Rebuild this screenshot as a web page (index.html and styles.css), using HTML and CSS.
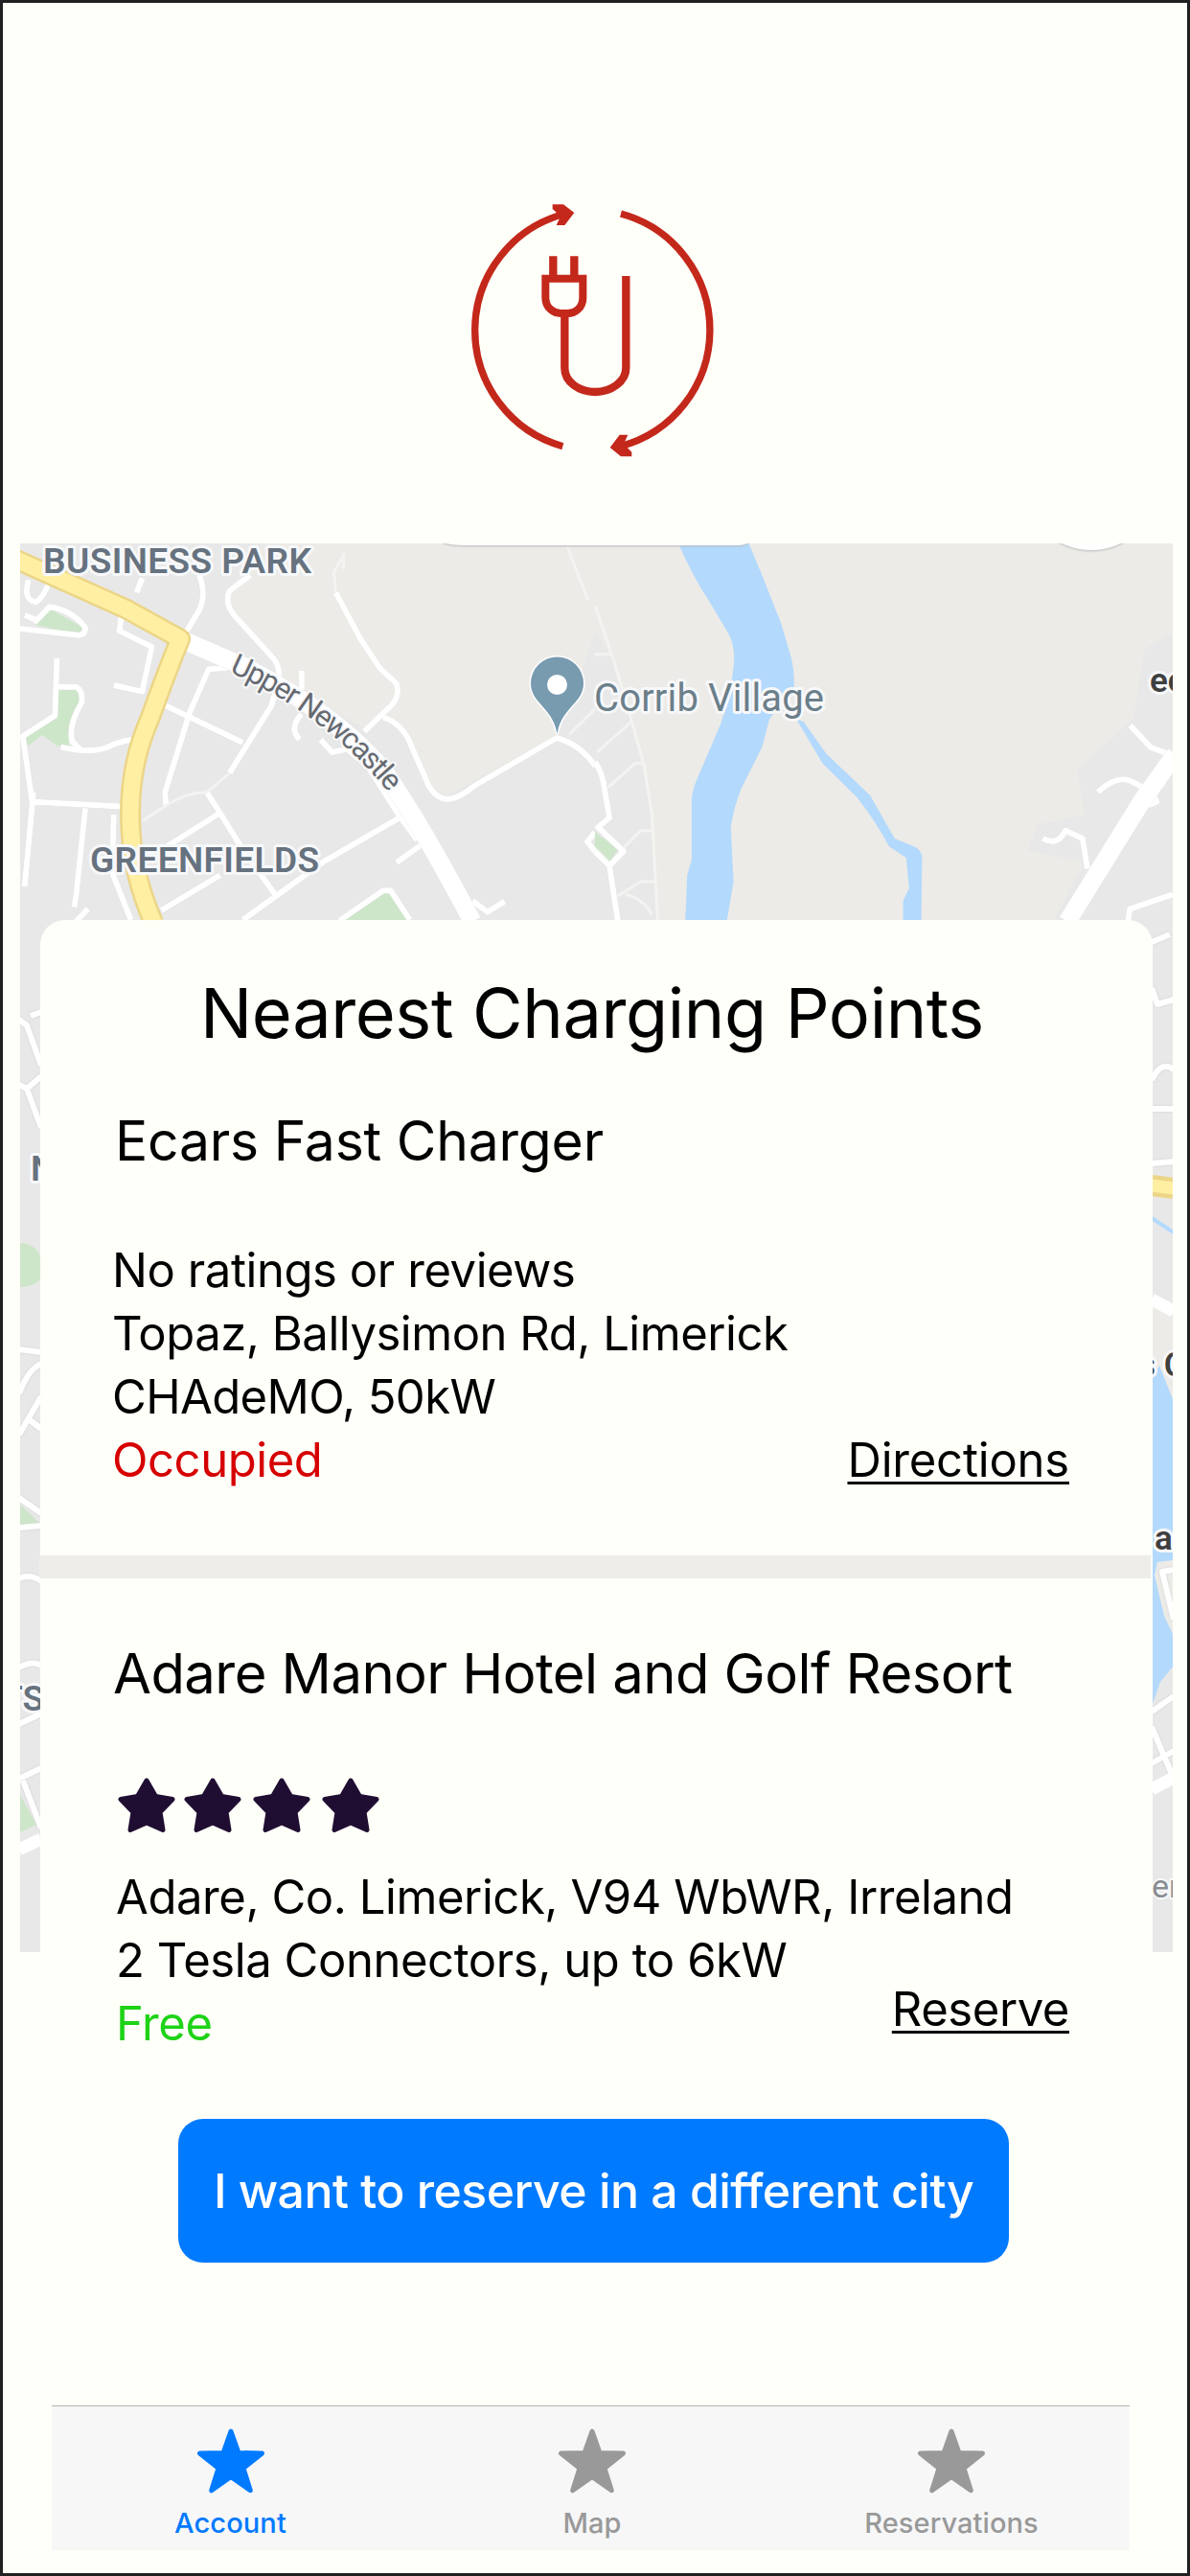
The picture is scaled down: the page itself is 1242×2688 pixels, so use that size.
FILE: index.html
```html
<!DOCTYPE html>
<html lang="en">
<head>
<meta charset="utf-8">
<title>Nearest Charging Points</title>
<link rel="stylesheet" href="styles.css">
</head>
<body>
<div class="screen">
  <header class="header">
    <svg class="logo" viewBox="0 0 900 900">
      <g class="logo-line">
        <path stroke-width="22" d="M352 827A377 377 0 0 1 360 99M534 99A377 377 0 0 1 530 828"/>
        <path stroke-width="25" d="M322 232V300M388 232V300"/>
        <path stroke-width="24" d="M298 302H415V362C415 394 390 411 368 411H346C324 411 298 394 298 362Z"/>
        <path stroke-width="25" d="M358 411V582C358 626 404 657 453 657C504 657 550 624 550 582V294"/>
      </g>
      <path class="logo-fill" d="M320 70H354L388 96 358 135H332L345 107 320 84ZM568 859H534L500 831 530 791H556L543 820 568 845Z"/>
    </svg>
  </header>

  <main class="finder">
    <svg class="map" viewBox="21 567 1203 1470">
      <path class="land" d="M277 567L238 617 246 640 289 693 293 710 380 760 400 748 420 757 436 797 451 823 467 830 581 768 594 737 621 660 641 690 661 750 680 850 686 960H1100L1132 900 1072 887 1084 860 1132 850 1124 803 1183 750 1195 677 1224 660V567Z"/>

      <!-- north-west neighbourhood -->
      <g transform="translate(0 550) scale(.396 .3333)">
        <path class="park" d="M90 305L130 255 220 315 205 335ZM150 510H210L215 550 185 620 180 685H150L110 650 75 685 60 660 140 590ZM900 1232L1020 1140 1075 1232Z"/>
        <g class="road minor">
          <path d="M75 165Q60 230 95 235Q115 220 130 170M90 300L130 250Q190 260 225 315Q225 340 205 338L53 318M65 275L95 290M320 275L315 325 400 375 375 515 300 495M150 410L145 590 60 655 85 860M150 500H200Q220 510 215 550Q180 620 190 670L210 695M160 688Q250 715 300 680Q330 665 360 665M90 860L330 875M88 830L65 1125M225 880L200 1160 195 1190M300 900L295 1080 345 1230M232 1195L200 1235"/>
          <path d="M525 150Q545 210 525 260L490 330M660 150L605 200Q590 240 620 280L720 410Q740 440 735 480L715 560 605 770M885 205L950 350 1000 440 1045 490Q1055 530 1030 560L960 640M1010 595Q1050 610 1075 660L1130 810Q1150 850 1180 852Q1210 850 1250 810L1467 660Q1530 680 1570 750M600 440L550 445 500 580 435 830 438 875M430 555L640 675M795 450L795 510M795 585Q760 630 790 665M845 665L875 705 915 695 970 750 1050 900 1100 980M545 830L580 895 640 1010 725 1150M580 895L440 1000M1060 905L850 1050 640 1230M1110 995L1045 1050M580 1090L425 1200M895 1232L1010 1138 1030 1138 1080 1230M1245 1170L1285 1205 1330 1172M1568 955L1548 985 1568 1015M375 160L360 205"/>
        </g>
        <path class="road faint" d="M910 80L880 140 885 205M905 80V130M1495 60L1550 230M545 830Q490 830 440 870L375 920M605 770L545 830M1500 650L1568 570"/>
        <path class="road major" d="M490 358L640 435Q880 580 1010 760Q1110 930 1245 1235"/>
        <path class="yellow-edge" d="M30 95L330 255 475 350Q440 450 395 600Q335 760 345 950Q350 1090 405 1240"/>
        <path class="yellow" d="M30 95L330 255 475 350Q440 450 395 600Q335 760 345 950Q350 1090 405 1240"/>
      </g>

      <!-- river and eastern roads -->
      <g transform="translate(621 550) scale(.396 .3333)">
        <path class="road faint" d="M0 245L50 420 95 600 130 750 150 900 165 1230M0 398H40M5 705L95 610M35 815L105 740H130M75 1005L120 950H150M60 1155L120 1110H160M80 1150Q130 1165 150 1215"/>
        <path class="park" d="M0 955L60 1010 40 1045 0 1000Z"/>
        <path class="road minor" d="M0 735Q20 770 25 820L38 910 8 940 75 1015 38 1060 0 1015M38 1060L60 1232M1410 620L1465 690 1523 715M1325 830Q1380 770 1420 800L1460 825M1500 800L1470 830 1480 860 1450 875M1180 975Q1220 1000 1240 950L1285 975 1298 1070M1523 1150L1410 1195 1405 1232"/>
        <path class="water" d="M222 57Q260 160 300 230L350 330Q370 370 366 430L355 530 330 620 265 800Q252 840 255 880V1040L243 1090 238 1230H348L365 1110 358 940Q365 880 385 820L440 690 460 600 525 500Q525 440 515 400L490 300 440 150 405 50ZM530 600L600 740 690 845Q740 920 775 1000L820 1035 828 1130 812 1170V1230H860L862 1030Q855 1005 840 1000L790 975 725 840 690 800 610 710 550 610Z"/>
        <path class="road major" d="M1530 710L1440 860 1245 1235"/>
      </g>

      <!-- western edge -->
      <path class="park" d="M21 1297Q38 1298 42 1312V1335Q34 1343 21 1343ZM21 1570L42 1590 21 1592ZM21 1873L38 1904 21 1912Z"/>
      <path class="road minor" d="M20 1064L28 1070 43 1112M32 1060L43 1056M20 1132L28 1136 43 1123M28 1136L43 1177M20 1408L43 1411M20 1454Q30 1428 43 1423M20 1497L43 1457M30 1481L43 1491M20 1563L43 1579M20 1594L43 1592M20 1647Q32 1642 43 1650M20 1740Q34 1732 43 1738M20 1799L43 1788M20 1856L43 1845M24 1858L43 1908"/>
      <path class="road main" d="M20 1930L43 1919"/>

      <!-- eastern edge -->
      <path class="land" d="M1203 1362L1224 1374V1705H1203Z"/>
      <path class="water" d="M1203 1437L1210 1425 1224 1460V1628L1208 1630 1205 1644 1215 1686 1224 1705V1739L1211 1755 1203 1778Z"/>
      <path class="yellow-edge" d="M1202 1237L1225 1240"/>
      <path class="yellow thin" d="M1202 1237L1225 1240"/>
      <path class="stream" d="M1202 1271L1225 1286"/>
      <path class="road minor" d="M1202 983L1221 975M1202 1031L1208 1048 1225 1043M1202 1127Q1212 1106 1225 1116M1202 1157H1225M1202 1214L1225 1212M1225 1690L1213 1640 1225 1638M1202 1786L1225 1770M1202 1802L1225 1856M1202 1840L1225 1827"/>
      <path class="road main" d="M1202 1356L1225 1368M1202 1867L1225 1855"/>

      <g class="overlay">
        <path d="M462 560H780V567Q776 569 770 569H486Q470 569 462 566Z"/>
        <circle cx="1139" cy="504" r="70"/>
      </g>

      <path class="pin" d="M581.500 766C577 738 554 734 554 713A27.500 27.500 0 0 1 609 713C609 734 586 738 581.500 766Z"/>
      <circle class="pin-eye" cx="581.500" cy="714.500" r="10.500"/>

      <path id="street" class="guide" d="M239 701Q337 744 405 826"/>
      <g class="label">
        <text class="district" x="45" y="598" textLength="280">BUSINESS PARK</text>
        <text class="district" x="94" y="910" textLength="239">GREENFIELDS</text>
        <text class="district" x="32" y="1232">N</text>
        <text class="district" x="1" y="1785">TS</text>
        <text class="place" x="620" y="742" textLength="240">Corrib Village</text>
        <text class="street"><textPath href="#street" textLength="211">Upper Newcastle</textPath></text>
        <text class="poi" x="1200" y="722">ec</text>
        <text class="poi" x="1188" y="1436">s C</text>
        <text class="poi" x="1205" y="1617">a</text>
        <text class="street large" x="1202" y="1980">er</text>
      </g>
    </svg>

    <section class="card">
      <h1 class="title">Nearest Charging Points</h1>

      <article class="station first">
        <h2 class="name">Ecars Fast Charger</h2>
        <p class="line t1">No ratings or reviews</p>
        <p class="line t2">Topaz, Ballysimon Rd, Limerick</p>
        <p class="line t3">CHAdeMO, 50kW</p>
        <div class="row">
          <span class="line busy">Occupied</span>
          <a class="line link directions">Directions</a>
        </div>
      </article>

      <div class="divider"></div>

      <article class="station second">
        <h2 class="name">Adare Manor Hotel and Golf Resort</h2>
        <div class="rating">
          <svg viewBox="0 0 60 58"><path d="M30 3L39.500 19.500 57 22.500 44 36 47 54.500 30 47 13 54.500 16 36 3 22.500 20.500 19.500Z"/></svg>
          <svg viewBox="0 0 60 58"><path d="M30 3L39.500 19.500 57 22.500 44 36 47 54.500 30 47 13 54.500 16 36 3 22.500 20.500 19.500Z"/></svg>
          <svg viewBox="0 0 60 58"><path d="M30 3L39.500 19.500 57 22.500 44 36 47 54.500 30 47 13 54.500 16 36 3 22.500 20.500 19.500Z"/></svg>
          <svg viewBox="0 0 60 58"><path d="M30 3L39.500 19.500 57 22.500 44 36 47 54.500 30 47 13 54.500 16 36 3 22.500 20.500 19.500Z"/></svg>
        </div>
        <p class="line">Adare, Co. Limerick, V94 WbWR, Irreland</p>
        <p class="line">2 Tesla Connectors, up to 6kW</p>
        <div class="row">
          <span class="line free">Free</span>
          <a class="line link reserve">Reserve</a>
        </div>
      </article>
    </section>
  </main>

  <button class="cta">I want to reserve in a different city</button>

  <nav class="tabs">
    <a class="tab active">
      <svg viewBox="0 0 70 68"><path d="M35 3L43 25.500 67.500 26 48 41.500 55.300 64.700 35 50.500 14.700 64.700 22 41.500 2.500 26 27 25.500Z"/></svg>
      <span>Account</span>
    </a>
    <a class="tab">
      <svg viewBox="0 0 70 68"><path d="M35 3L43 25.500 67.500 26 48 41.500 55.300 64.700 35 50.500 14.700 64.700 22 41.500 2.500 26 27 25.500Z"/></svg>
      <span>Map</span>
    </a>
    <a class="tab">
      <svg viewBox="0 0 70 68"><path d="M35 3L43 25.500 67.500 26 48 41.500 55.300 64.700 35 50.500 14.700 64.700 22 41.500 2.500 26 27 25.500Z"/></svg>
      <span>Reservations</span>
    </a>
  </nav>
</div>
</body>
</html>
```
FILE: styles.css
```css
* { box-sizing: border-box; }

body {
  margin: 0;
  font-family: Inter, "Liberation Sans", sans-serif;
  color: #000;
}

h1, h2, p { margin: 0; font-weight: 400; }

svg { display: block; }

.screen {
  display: flex;
  flex-direction: column;
  width: 1242px;
  height: 2688px;
  border: 3px solid #1f2020;
  background: #fffff9;
  overflow: hidden;
}

/* Logo */
.header {
  display: flex;
  justify-content: center;
  height: 564px;
  padding: 187px 2px 0 0;
}
.logo { width: 300px; height: 300px; }
.logo-line { fill: none; stroke: #c3281b; }
.logo-fill { fill: #c3281b; }

/* Map with the card laid over it */
.finder {
  display: grid;
  grid-template: auto / 1203px;
  padding-left: 18px;
}
.map {
  grid-area: 1 / 1;
  width: 1203px;
  height: 1470px;
  background: #e8e8e8;
}
.land { fill: #ecebe7; }
.park { fill: #cde6c9; }
.water { fill: #b3d9fd; }
.stream { fill: none; stroke: #b3d9fd; stroke-width: 4; }
.road { fill: none; stroke: #fff; stroke-linejoin: round; vector-effect: non-scaling-stroke; }
.road path { vector-effect: non-scaling-stroke; }
.minor { stroke-width: 6; filter: drop-shadow(0 0 1px #cfcfcf); }
.main { stroke-width: 13; }
.major { stroke-width: 19; filter: drop-shadow(0 0 1px #cfcfcf); }
.faint { stroke: #f4f3f1; stroke-width: 3; }
.yellow, .yellow-edge { fill: none; stroke-linejoin: round; vector-effect: non-scaling-stroke; }
.yellow { stroke: #feefa3; stroke-width: 17; }
.yellow.thin { stroke-width: 13; }
.yellow-edge { stroke: #ecd587; stroke-width: 22; }
.overlay { fill: #fff; filter: drop-shadow(0 1px 1px #bbb); }
.pin { fill: #789bb0; stroke: #fff; stroke-width: 3; paint-order: stroke; }
.pin-eye { fill: #fff; }
.guide { fill: none; }
.label {
  font-family: Roboto, sans-serif;
  paint-order: stroke;
  stroke: #f7f8fa;
  stroke-width: 6px;
  stroke-linejoin: round;
}
.district { font-size: 37px; font-weight: 600; fill: #66727f; }
.place { font-size: 40px; font-weight: 450; fill: #6b7f8a; }
.street { font-size: 31px; font-weight: 450; fill: #666a70; stroke-width: 4px; }
.street.large { font-size: 34px; fill: #8a8d91; }
.poi { font-size: 35px; font-weight: 600; fill: #3f3f3f; }

.card {
  grid-area: 1 / 1;
  margin: 393px 21px 0;
  padding-top: 52px;
  border-radius: 26px 26px 0 0;
  background: #fffff9;
}
.title {
  padding-left: 167px;
  font-size: 72px;
  line-height: 90px;
  letter-spacing: -.38px;
}
.station { padding-right: 87px; }
.first { padding-top: 54px; padding-left: 75px; }
.second { padding-top: 64px; padding-left: 79px; }

.name { font-size: 57px; line-height: 70px; letter-spacing: -.2px; }
.first .name { padding-left: 3px; margin-bottom: 67px; }
.second .name {
  margin: 0 0 74px -3px;
  font-size: 58px;
  letter-spacing: -.58px;
}
.line {
  font-size: 49px;
  line-height: 66px;
  letter-spacing: -.43px;
  white-space: nowrap;
}
.t2 { letter-spacing: -.48px; }
.t3 { letter-spacing: -.6px; }
.row { display: flex; justify-content: space-between; height: 66px; }
.busy { color: #d60000; }
.free { color: #1ed317; }
.link {
  text-decoration: underline;
  text-decoration-thickness: 3px;
  text-underline-offset: 5px;
  text-decoration-skip-ink: none;
}
.directions { letter-spacing: -.2px; }
.reserve { margin-top: -15px; }

.divider {
  height: 24px;
  margin: 66px 2px 0 -1px;
  background: #eeede9;
}

.rating { display: flex; gap: 12px; margin: 0 0 34px 2px; }
.rating svg {
  width: 60px;
  height: 58px;
  fill: #200e32;
  stroke: #200e32;
  stroke-width: 5;
  stroke-linejoin: round;
}
.rating svg:first-child { margin-right: -3px; }

.cta {
  width: 867px;
  height: 150px;
  margin: 66px 0 0 183px;
  padding: 0;
  border: 0;
  border-radius: 26px;
  background: #007aff;
  color: #fff;
  font: 500 50px/150px Inter, "Liberation Sans", sans-serif;
  letter-spacing: -.549px;
  flex: none;
}

.tabs {
  display: grid;
  grid-template-columns: repeat(3, 1fr);
  flex: none;
  width: 1125px;
  height: 151px;
  margin: 149px 0 0 51px;
  border-top: 1px solid #b2b2b2;
  background: #f7f7f8;
}
.tab {
  display: flex;
  flex-direction: column;
  align-items: center;
  gap: 13px;
  padding-top: 23px;
  color: #999;
  font-size: 29px;
  font-weight: 450;
  line-height: 36px;
  letter-spacing: .1px;
}
.tab svg {
  width: 70px;
  height: 68px;
  fill: currentColor;
  stroke: currentColor;
  stroke-width: 5;
  stroke-linejoin: round;
}
.tab.active { padding-right: 2px; color: #007aff; }
.tab:not(.active) { padding-left: 3px; }
```
